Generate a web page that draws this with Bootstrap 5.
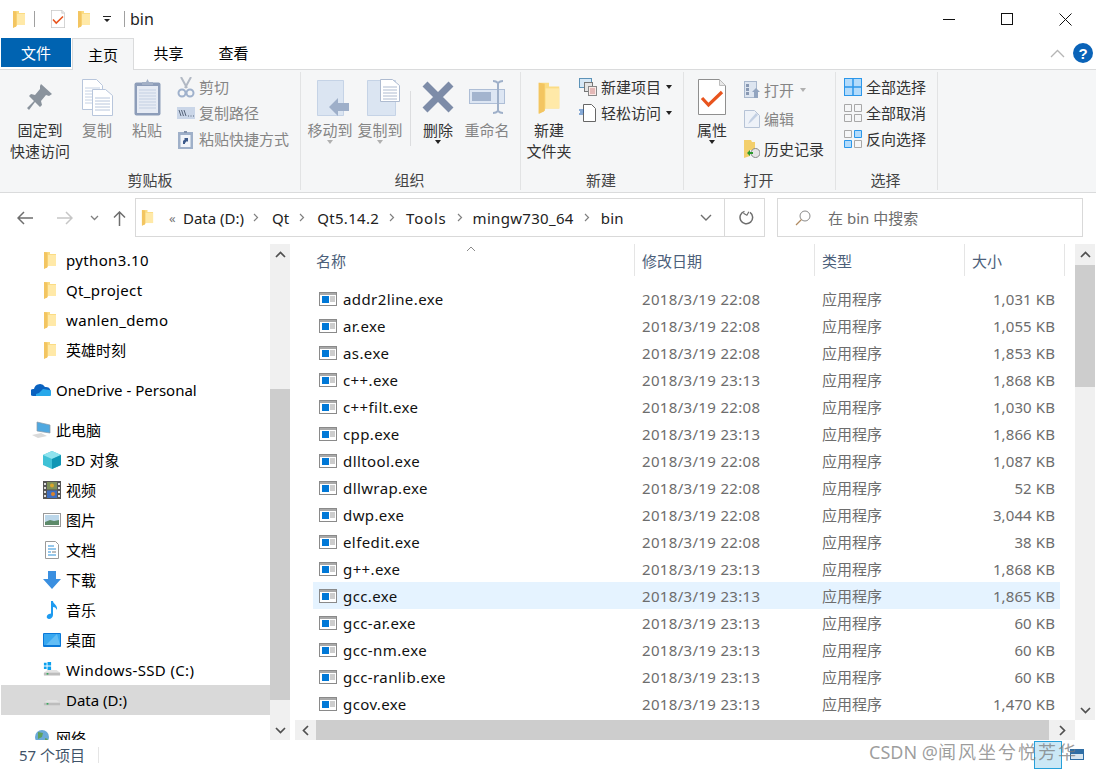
<!DOCTYPE html>
<html lang="zh">
<head>
<meta charset="utf-8">
<title>bin</title>
<link href="https://cdn.jsdelivr.net/npm/bootstrap@5.3.0/dist/css/bootstrap.min.css" rel="stylesheet">
<style>
html,body{height:100%;}
body{width:1096px;height:771px;overflow:hidden;background:#fff;color:#000;font-family:"Noto Sans","Noto Sans CJK SC",sans-serif;font-size:15px;line-height:20px;}
svg{display:block;flex:none;}
.win{width:1096px;height:771px;position:relative;overflow:hidden;}
.titlebar{height:38px;padding-left:12px;}
.t-sep{width:1px;height:16px;background:#a0a0a0;}
.t-arrow{width:8px;height:6px;}
.win-btn{width:58px;height:38px;}
.tabs{height:32px;}
.tab-file{width:70px;height:29px;margin-left:1px;background:#0063b1;color:#fff;}
.tab-home{width:62px;height:32px;margin-left:1px;background:#f5f6f7;border:1px solid #dadbdc;border-bottom:0;position:relative;z-index:1;}
.tab-plain{width:65px;height:30px;}
.tab-right{padding-right:3px;height:30px;}
.ribbon{height:124px;background:#f5f6f7;border-top:1px solid #dadbdc;border-bottom:1px solid #dadbdc;margin-top:-1px;color:#333;}
.grp{height:118px;margin-top:2px;border-right:1px solid #e2e3e4;}
.g1{width:301px;}.g2{width:220px;}.g3{width:163px;}.g4{width:152px;}.g5{width:102px;}
.grp-body{flex:1;padding-top:6px;}
.grp-name{height:20px;line-height:20px;text-align:center;color:#444;}
.g2 .grp-name,.g3 .grp-name,.g4 .grp-name,.g5 .grp-name{padding-right:2px;}
.big{display:flex;flex-direction:column;align-items:center;flex:none;width:46px;line-height:21px;text-align:center;white-space:nowrap;}
.big-w{width:60px;}
.big-ico{height:38px;margin-bottom:4px;display:flex;align-items:center;justify-content:center;}
.off{color:#858585;}
.smalls{margin-top:-4px;}
.sm{height:26px;display:flex;align-items:center;white-space:nowrap;}
.sm svg{margin-right:4px;}
.tri{width:0;height:0;border-left:3.5px solid transparent;border-right:3.5px solid transparent;border-top:4px solid #222;}
.tri.pale{border-top-color:#b0b0b0;}
.tri-u{margin-top:-1px;}
.vbar{width:1px;height:55px;background:#dcdddf;margin-top:13px;}
.addr{height:50px;padding-top:5px;}
.navs{width:135px;height:40px;}
.addr-box{width:630px;height:39px;border:1px solid #d9d9d9;color:#222;}
.crumb-sep{color:#777;}
.crumb{letter-spacing:.3px;}
.crumb-t{letter-spacing:.8px;}
.search{width:306px;height:39px;margin-left:12px;border:1px solid #d9d9d9;color:#6d6d6d;}
.main{height:497px;}
.side{width:270px;height:497px;overflow:hidden;flex:none;padding-top:2px;}
.nv{height:30px;display:flex;align-items:center;padding-left:43px;white-space:nowrap;}
.nv svg{width:18px;margin-right:5px;}
.nv-top{padding-left:31px;}
.nv-top svg{width:20px;margin-right:5px;}
.nv-sel{background:#d9d9d9;margin-left:1px;padding-left:42px;}
.lat{letter-spacing:.35px;}
.sb-v{width:20px;background:#f0f0f0;flex:none;margin-top:1px;display:flex;flex-direction:column;}
.sb-btn{height:20px;flex:none;display:flex;align-items:center;justify-content:center;}
.thumb{background:#cdcdcd;}
.pane{width:801px;margin-left:5px;flex:none;display:flex;flex-direction:column;}
.pane-top{height:477px;}
.list{width:780px;flex:none;overflow:hidden;}
.head{height:33px;color:#4c607a;margin-top:1px;}
.hc{height:32px;display:flex;align-items:center;flex:none;padding-left:7px;padding-top:2px;border-right:1px solid #e5e5e5;white-space:nowrap;}
.c-name{width:340px;}.c-date{width:180px;}.c-type{width:150px;}.c-size{width:100px;}
.rows{padding-left:18px;padding-top:8px;}
.fr{height:27px;width:747px;display:flex;align-items:center;color:#6d6d6d;white-space:nowrap;}
.fr-sel{background:#e5f3ff;}
.f-name{width:329px;display:flex;align-items:center;color:#111;padding-left:6px;letter-spacing:.4px;}
.f-name svg{margin-right:6px;}
.f-date{width:180px;letter-spacing:.33px;}.f-type{width:150px;padding-left:0;}.f-size{width:83px;text-align:right;letter-spacing:.1px;}
.sb-h{height:20px;width:780px;background:#f0f0f0;display:flex;}
.sb-hb{width:21px;flex:none;display:flex;align-items:center;justify-content:center;}
.status{height:30px;padding-left:19px;color:#3f5369;}
.st-sep{width:1px;height:16px;background:#e5e5e5;margin-left:13px;}
.mark-wm{position:absolute;left:869px;top:741px;height:22px;line-height:22px;font-size:18px;color:rgba(120,120,120,.72);white-space:nowrap;z-index:3;}
.mark-cjk{letter-spacing:2px;}
.tb-ico{position:absolute;left:1034px;top:741px;width:28px;height:28px;background:#cbe8f6;border:1px solid #26a0da;z-index:2;}
.tb-thumb{position:absolute;left:1070px;top:749px;z-index:2;}
</style>
</head>
<body>
<svg width="0" height="0" style="position:absolute">
<defs>
<symbol id="fold" viewBox="0 0 14 18"><path d="M1 1l6 0 0 2 6 0 0 12-8 0-1 1.500-3 1z" fill="#fbdc84"/><path d="M1 1l3.500 .5 0 14.500-.5 .6-3 1.400z" fill="#f3c561"/><path d="M5 4h8v11H5z" fill="#ffe9a8"/></symbol>
<symbol id="exe" viewBox="0 0 18 14"><rect x=".5" y=".5" width="17" height="13" fill="#fff" stroke="#8a8a8a"/><rect x="1" y="1" width="16" height="2" fill="#a9a9a9"/><rect x="3" y="4" width="7" height="7" fill="#0078d7"/><path d="M11 5h5M11 7h5M11 9h5" stroke="#9a9a9a"/></symbol>
<symbol id="drive" viewBox="0 0 20 18"><path d="M1 12l4-3h10l4 3v3H1z" fill="#e3e3e3"/><path d="M1 12h18v3H1z" fill="#bdbdbd"/><rect x="4" y="12.500" width="2" height="1.500" fill="#1fa84b"/></symbol>
<symbol id="doccheck" viewBox="0 0 28 36"><path d="M.5.5h21l6 6v29H.5z" fill="#fff" stroke="#8f8f8f"/><path d="M21.500.5v6h6" fill="#e8e8e8" stroke="#bdbdbd"/><path d="M4 19l6.500 7L24 13" fill="none" stroke="#e8541e" stroke-width="3.200"/></symbol>
</defs>
</svg>

<div class="win d-flex flex-column">
  <div class="titlebar d-flex align-items-center flex-none">
    <svg width="14" height="18"><use href="#fold"/></svg>
    <span class="t-sep ms-2 me-3" style="margin-left:9px"></span>
    <svg width="14" height="18" viewBox="0 0 28 36"><use href="#doccheck"/></svg>
    <svg class="ms-2" style="margin-left:12px!important" width="14" height="18"><use href="#fold"/></svg>
    <svg class="t-arrow" style="margin-left:12px" viewBox="0 0 8 6"><path d="M0 0h8v1H0zM1 3h6L4 6z" fill="#222"/></svg>
    <span class="t-sep" style="margin-left:13px"></span>
    <span style="margin-left:5px;font-size:16px;color:#222">bin</span>
    <div class="ms-auto d-flex" style="margin-right:2px">
      <div class="win-btn d-flex align-items-center justify-content-center"><svg width="13" height="13"><path d="M0 6.500h12" stroke="#111"/></svg></div>
      <div class="win-btn d-flex align-items-center justify-content-center"><svg width="13" height="13"><rect x=".5" y=".5" width="11" height="11" fill="none" stroke="#111"/></svg></div>
      <div class="win-btn d-flex align-items-center justify-content-center"><svg width="13" height="13"><path d="M.5.5l12 12M12.500.5l-12 12" stroke="#111"/></svg></div>
    </div>
  </div>

  <div class="tabs d-flex flex-none">
    <div class="tab-file d-flex align-items-center justify-content-center">文件</div>
    <div class="tab-home d-flex align-items-center justify-content-center">主页</div>
    <div class="tab-plain d-flex align-items-center justify-content-center" style="margin-left:2px">共享</div>
    <div class="tab-plain d-flex align-items-center justify-content-center">查看</div>
    <div class="tab-right ms-auto d-flex align-items-center">
      <svg width="15" height="9" class="me-2"><path d="M1 8l6.500-6.500L14 8" fill="none" stroke="#b5b5b5" stroke-width="1.300"/></svg>
      <svg width="20" height="20" viewBox="0 0 20 20"><circle cx="10" cy="10" r="10" fill="#0a63b8"/><text x="10" y="15.500" text-anchor="middle" font-size="15" font-weight="700" fill="#fff" font-family="Liberation Sans">?</text></svg>
    </div>
  </div>

  <div class="ribbon d-flex flex-none">
    <!-- 剪贴板 -->
    <div class="grp g1 d-flex flex-column flex-none">
      <div class="grp-body d-flex" style="padding-left:10px">
        <div class="big big-w"><div class="big-ico"><svg width="26" height="28" viewBox="0 0 26 28"><path d="M14 1l11 10-3 2-3-1-5 6 1 4-2 2-5-5-6 8-2-2 7-7-5-5 2-2 4 1 5-6v-3z" fill="#8a939d"/></svg></div><div>固定到<br>快速访问</div></div>
        <div class="big off" style="margin-left:4px"><div class="big-ico"><svg width="31" height="37" viewBox="0 0 31 37"><path d="M.5.500h14l6 6v24H.5z" fill="#fff" stroke="#b8c6dc"/><path d="M3 9h15M3 12h15M3 15h15M3 18h15M3 21h15M3 24h15" stroke="#c6d2e4"/><path d="M10.500 10.500h13l7 6v20h-20z" fill="#fff" stroke="#b8c6dc"/><path d="M13 19h15M13 22h15M13 25h15M13 28h15M13 31h15" stroke="#b8c6dc"/></svg></div><div>复制</div></div>
        <div class="big off" style="margin-left:4px"><div class="big-ico"><svg width="27" height="37" viewBox="0 0 27 37"><rect x=".5" y="3.500" width="26" height="33" rx="2" fill="#8d9db9"/><rect x="3" y="7" width="21" height="27" fill="#e6ebf4"/><path d="M5 11h17M5 14h17M5 17h17M5 20h17M5 23h17M5 26h17M5 29h17" stroke="#c3cfe2"/><path d="M8 6V3h4l1.500-3 1.500 3h4v3z" fill="#a3b0c6"/></svg></div><div>粘贴</div></div>
        <div class="smalls off" style="margin-left:7px">
          <div class="sm"><svg width="18" height="21" viewBox="0 0 18 21"><path d="M4 0l6 11M14 0L8 11" stroke="#b2b9c4" stroke-width="2"/><circle cx="5" cy="16" r="3.500" fill="none" stroke="#9fb1cc" stroke-width="2"/><circle cx="13" cy="16" r="3.500" fill="none" stroke="#9fb1cc" stroke-width="2"/></svg><span>剪切</span></div>
          <div class="sm"><svg width="18" height="12" viewBox="0 0 18 12"><rect width="18" height="12" fill="#cad6e8"/><path d="M2 3l2 6M4.500 3l2 6M7 3l2 6" stroke="#56647a"/><path d="M11 9h1M13.500 9h1M16 9h1" stroke="#56647a"/></svg><span>复制路径</span></div>
          <div class="sm"><svg width="18" height="19" viewBox="0 0 18 19" style="margin-right:4px"><rect x="1" y="2" width="15" height="17" fill="#9fb0c9"/><rect x="3.500" y="5" width="10" height="12" fill="#f2f5fa"/><path d="M7 1h3v2H7z" fill="#8292ac"/><path d="M6 14v-3l2-2-1-1h4v4l-1-1-2 2v1z" fill="#3e5b8b"/></svg><span>粘贴快捷方式</span></div>
        </div>
      </div>
      <div class="grp-name">剪贴板</div>
    </div>
    <!-- 组织 -->
    <div class="grp g2 d-flex flex-column flex-none">
      <div class="grp-body d-flex" style="padding-left:6px">
        <div class="big off"><div class="big-ico"><svg width="38" height="37" viewBox="0 0 38 37"><path d="M6.500 1.500h26v35h-26z" fill="#dbe5f2" stroke="#c5d3e6"/><path d="M18 28l9-9v5h11v8H27v5z" fill="#9eafc9"/></svg></div><div>移动到</div><div class="tri pale tri-u"></div></div>
        <div class="big off" style="margin-left:4px"><div class="big-ico"><svg width="40" height="37" viewBox="0 0 40 37"><path d="M7.500 1.500h28v35h-28z" fill="#dbe5f2" stroke="#c5d3e6"/><path d="M20.500.5h12l7 6v16h-19z" fill="#fff" stroke="#aebbd0"/><path d="M23 8h14M23 11h14M23 14h14M23 17h14M23 20h14" stroke="#aebbd0"/></svg></div><div>复制到</div><div class="tri pale tri-u"></div></div>
        <div class="vbar" style="margin-left:7px"></div>
        <div class="big" style="margin-left:4px"><div class="big-ico"><svg width="32" height="32" viewBox="0 0 32 32"><path d="M3 3l26 26M29 3L3 29" stroke="#7d8ca8" stroke-width="7"/></svg></div><div>删除</div><div class="tri tri-u"></div></div>
        <div class="big off" style="margin-left:3px"><div class="big-ico"><svg width="36" height="34" viewBox="0 0 36 34"><rect x=".5" y="9.500" width="35" height="14" fill="#dde6f3" stroke="#aebed6"/><rect x="3" y="12" width="19" height="9" fill="#a3b4ce"/><path d="M24 1c3 0 4 1 5 2 1-1 2-2 5-2M29 3v28M24 33c3 0 4-1 5-2 1 1 2 2 5 2" fill="none" stroke="#9fb0c9" stroke-width="2"/></svg></div><div>重命名</div></div>
      </div>
      <div class="grp-name">组织</div>
    </div>
    <!-- 新建 -->
    <div class="grp g3 d-flex flex-column flex-none">
      <div class="grp-body d-flex" style="padding-left:5px">
        <div class="big"><div class="big-ico"><svg width="24" height="33" viewBox="0 0 14 18" preserveAspectRatio="none"><use href="#fold"/></svg></div><div>新建<br>文件夹</div></div>
        <div class="smalls" style="margin-left:7px">
          <div class="sm"><svg width="18" height="18" viewBox="0 0 18 18"><rect x=".5" y=".5" width="12" height="9" fill="#d7e8f6" stroke="#5d93b8"/><rect x="5.500" y="4.500" width="8" height="9" fill="#e4e4e4" stroke="#777"/><rect x="9.500" y="8.500" width="8" height="9" fill="#fbe9e6" stroke="#888"/><path d="M11 11h5M11 13h5M11 15h5" stroke="#c88"/></svg><span>新建项目</span><span class="tri" style="margin-left:5px"></span></div>
          <div class="sm"><svg width="18" height="18" viewBox="0 0 18 18"><path d="M4.500.5h8l4 4v13h-12z" fill="#fff" stroke="#666"/><path d="M0 6h5M1 8h4M0 10h4" stroke="#1a5fb4"/></svg><span>轻松访问</span><span class="tri" style="margin-left:5px"></span></div>
        </div>
      </div>
      <div class="grp-name">新建</div>
    </div>
    <!-- 打开 -->
    <div class="grp g4 d-flex flex-column flex-none">
      <div class="grp-body d-flex" style="padding-left:13px">
        <div class="big" style="width:30px"><div class="big-ico"><svg width="28" height="36" viewBox="0 0 28 36"><use href="#doccheck"/></svg></div><div>属性</div><div class="tri tri-u"></div></div>
        <div class="off" style="margin-left:17px;margin-top:-3px">
          <div class="sm" style="height:29px"><svg width="16" height="18" viewBox="0 0 16 18" style="margin-right:4px"><rect x=".5" y=".5" width="12" height="16" fill="#dde5f0" stroke="#a9b8cd"/><path d="M2 3h3v3H2zM2 7h3v3H2zM2 11h3v3H2z" fill="#8999b3"/><path d="M12 7l4 4h-2v6h-4v-6H8z" fill="#93a5c0"/></svg><span>打开</span><span class="tri pale" style="margin-left:6px"></span></div>
          <div class="sm" style="height:30px"><svg width="16" height="18" viewBox="0 0 16 18" style="margin-right:4px"><path d="M.5.500h10l5 5v12H.5z" fill="#eef2f8" stroke="#b6c3d6"/><path d="M4 14l2-4 6-7 2 2-7 7z" fill="#c3d0e3"/></svg><span>编辑</span></div>
          <div class="sm" style="height:30px;color:#333"><svg width="16" height="18" viewBox="0 0 16 18" style="margin-right:4px"><path d="M0 0h7l1 2h3v8H6v6l-6 2z" fill="#f3cf6c"/><circle cx="11.500" cy="13" r="4.500" fill="#e5e5e5" stroke="#888"/><path d="M3 13l3-3v2h3v2H6v2z" fill="#2c9b2c"/></svg><span>历史记录</span></div>
        </div>
      </div>
      <div class="grp-name">打开</div>
    </div>
    <!-- 选择 -->
    <div class="grp g5 d-flex flex-column flex-none">
      <div class="grp-body" style="padding-left:8px">
        <div class="smalls">
          <div class="sm"><svg width="18" height="18" viewBox="0 0 18 18"><rect x=".5" y=".5" width="17" height="17" fill="#b3dbfb" stroke="#2b97ea"/><path d="M9 0v18M0 9h18" stroke="#2b97ea" stroke-width="1.500"/></svg><span>全部选择</span></div>
          <div class="sm"><svg width="18" height="18" viewBox="0 0 18 18"><path d="M.5.500h7v7h-7zM10.500.500h7v7h-7zM.5 10.500h7v7h-7zM10.500 10.500h7v7h-7z" fill="none" stroke="#a8a8a8"/></svg><span>全部取消</span></div>
          <div class="sm"><svg width="18" height="18" viewBox="0 0 18 18"><path d="M.5.500h7v7h-7zM10.500 10.500h7v7h-7z" fill="none" stroke="#a8a8a8"/><path d="M10.500.500h7v7h-7zM.5 10.500h7v7h-7z" fill="#b3dbfb" stroke="#2b97ea"/></svg><span>反向选择</span></div>
        </div>
      </div>
      <div class="grp-name">选择</div>
    </div>
  </div>

  <div class="addr d-flex flex-none">
    <div class="navs d-flex align-items-center flex-none" style="padding-left:17px">
      <svg width="16" height="14" viewBox="0 0 16 14"><path d="M7 1L1 7l6 6M1 7h15" fill="none" stroke="#6e6e6e" stroke-width="1.500"/></svg>
      <svg width="16" height="14" viewBox="0 0 16 14" style="margin-left:24px"><path d="M9 1l6 6-6 6M15 7H0" fill="none" stroke="#c6c6c6" stroke-width="1.500"/></svg>
      <svg width="9" height="6" viewBox="0 0 9 6" style="margin-left:17px"><path d="M1 1l3.500 3.500L8 1" fill="none" stroke="#808080" stroke-width="1.300"/></svg>
      <svg width="13" height="15" viewBox="0 0 13 15" style="margin-left:14px"><path d="M6.500 1v14M1 6.500L6.500 1 12 6.500" fill="none" stroke="#6e6e6e" stroke-width="1.500"/></svg>
    </div>
    <div class="addr-box d-flex align-items-center flex-none" style="padding-left:5px">
      <svg width="13" height="17"><use href="#fold"/></svg>
      <span class="crumb-sep" style="width:29px;padding-left:15px;font-size:13px">«</span>
      <span>Data (D:)</span>
      <svg class="mx-0" width="6" height="9" viewBox="0 0 6 9" style="margin-left:9px!important"><path d="M1 1l3.500 3.500L1 8" fill="none" stroke="#808080" stroke-width="1.200"/></svg>
      <span style="margin-left:13px">Qt</span>
      <svg width="6" height="9" viewBox="0 0 6 9" style="margin-left:10px"><path d="M1 1l3.500 3.500L1 8" fill="none" stroke="#808080" stroke-width="1.200"/></svg>
      <span class="crumb" style="margin-left:12px">Qt5.14.2</span>
      <svg width="6" height="9" viewBox="0 0 6 9" style="margin-left:10px"><path d="M1 1l3.500 3.500L1 8" fill="none" stroke="#808080" stroke-width="1.200"/></svg>
      <span class="crumb-t" style="margin-left:11px">Tools</span>
      <svg width="6" height="9" viewBox="0 0 6 9" style="margin-left:10px"><path d="M1 1l3.500 3.500L1 8" fill="none" stroke="#808080" stroke-width="1.200"/></svg>
      <span class="crumb" style="margin-left:10px">mingw730_64</span>
      <svg width="6" height="9" viewBox="0 0 6 9" style="margin-left:10px"><path d="M1 1l3.500 3.500L1 8" fill="none" stroke="#808080" stroke-width="1.200"/></svg>
      <span class="crumb" style="margin-left:11px">bin</span>
      <div class="ms-auto d-flex align-items-center h-100">
        <svg width="12" height="7" viewBox="0 0 12 7" style="margin-right:12px"><path d="M1 1l5 5 5-5" fill="none" stroke="#6e6e6e" stroke-width="1.400"/></svg>
        <span style="width:1px;height:37px;background:#d9d9d9"></span>
        <svg width="15" height="15" viewBox="0 0 15 15" style="margin:0 10px 0 14px"><path d="M11 2.300A6.300 6.300 0 1 1 5.500 1.400" fill="none" stroke="#6e6e6e" stroke-width="1.500"/><path d="M6 0v4h4" fill="none" stroke="#6e6e6e" stroke-width="1.200" transform="rotate(-60 8 3)"/></svg>
      </div>
    </div>
    <div class="search d-flex align-items-center flex-none" style="padding-left:17px">
      <svg width="16" height="16" viewBox="0 0 16 16"><circle cx="10" cy="6" r="5" fill="none" stroke="#8a8a8a"/><path d="M6.500 9.500L1 15" stroke="#b08a60" stroke-width="1.200"/></svg>
      <span style="margin-left:17px">在 bin 中搜索</span>
    </div>
  </div>

  <div class="main d-flex flex-none">
    <div class="side">
      <div class="nv lat"><svg height="18"><use href="#fold" width="14" height="18"/></svg>python3.10</div>
      <div class="nv lat"><svg height="18"><use href="#fold" width="14" height="18"/></svg>Qt_project</div>
      <div class="nv lat"><svg height="18"><use href="#fold" width="14" height="18"/></svg>wanlen_demo</div>
      <div class="nv"><svg height="18"><use href="#fold" width="14" height="18"/></svg>英雄时刻</div>
      <div class="nv nv-top mt-2" style="margin-top:10px!important"><svg height="14" viewBox="0 0 20 14"><path d="M2 13a3.500 3.500 0 0 1 1-7 6 6 0 0 1 11-2 4 4 0 0 1 2 9z" fill="#0a62c0"/><path d="M5 13h13a2.500 2.500 0 0 0 0-6l-6-1-4 4-3 1z" fill="#28a8ea"/></svg>OneDrive - Personal</div>
      <div class="nv nv-top" style="margin-top:10px"><svg height="18" viewBox="0 0 20 18"><path d="M6 1l13 3v8l-13-2z" fill="#4fa8e0" stroke="#8a9aa8" stroke-width=".7"/><path d="M1 14l9-2 6 3-9 2z" fill="#dadada"/></svg>此电脑</div>
      <div class="nv"><svg height="18" viewBox="0 0 18 18"><path d="M9 0l9 4v10l-9 4-9-4V4z" fill="#3fc1d6"/><path d="M0 4l9 4 9-4-9-4z" fill="#8fe3ee"/><path d="M9 8v10l9-4V4z" fill="#0f96b4"/></svg>3D 对象</div>
      <div class="nv"><svg height="18" viewBox="0 0 18 18"><rect width="18" height="18" fill="#555"/><path d="M1 2h2v2H1zM1 6h2v2H1zM1 10h2v2H1zM1 14h2v2H1zM15 2h2v2h-2zM15 6h2v2h-2zM15 10h2v2h-2zM15 14h2v2h-2z" fill="#ddd"/><rect x="4" y="1" width="10" height="7.500" fill="#7f8f5a"/><rect x="4" y="9.500" width="10" height="7.500" fill="#3f6fc0"/><circle cx="10" cy="13" r="2" fill="#d9822b"/><circle cx="9" cy="4.500" r="2" fill="#d9a62b"/></svg>视频</div>
      <div class="nv"><svg height="14" viewBox="0 0 18 14"><rect x=".5" y=".5" width="17" height="13" fill="#fff" stroke="#9a9a9a"/><rect x="2" y="2" width="14" height="10" fill="#bcd7ea"/><path d="M2 9l5-2 4 1 5-1v5H2z" fill="#5d8a6a"/></svg>图片</div>
      <div class="nv"><svg height="18" viewBox="0 0 18 18"><path d="M2.500.500h10l3 3v14h-13z" fill="#fff" stroke="#9a9a9a"/><path d="M5 5h6M5 8h8M5 11h3M5 14h8" stroke="#2a8fd8"/><path d="M9 11h4" stroke="#7a7a7a"/></svg>文档</div>
      <div class="nv"><svg height="18" viewBox="0 0 18 18"><path d="M5 0h8v8h5l-9 10L0 8h5z" fill="#3a8fe0"/></svg>下载</div>
      <div class="nv"><svg height="18" viewBox="0 0 18 18"><path d="M8 0h2c0 3 5 4 4 9-1-2-2-3-4-3v8c0 2-2 4-4 4-3 0-3-4 0-5l2-.5z" fill="#1e9bf0"/></svg>音乐</div>
      <div class="nv"><svg height="14" viewBox="0 0 18 14"><rect width="18" height="14" rx="1" fill="#0a78d8"/><rect x="1" y="1" width="16" height="11" fill="#38a8f0"/><path d="M14 1L3 12h14z" fill="#62bdf5"/></svg>桌面</div>
      <div class="nv lat"><svg height="18" viewBox="0 0 20 18"><use href="#drive"/><path d="M1 1h3v3H1zM5 0h4v4H5zM1 5h3v3H1zM5 5h4v4H5z" fill="#0aa0ee"/></svg>Windows-SSD (C:)</div>
      <div class="nv nv-sel"><svg height="18" viewBox="0 0 20 18"><use href="#drive"/></svg>Data (D:)</div>
      <div class="nv nv-top" style="margin-top:8px"><svg height="18" viewBox="0 0 20 18"><circle cx="11" cy="8" r="7" fill="#6aa9d8"/><path d="M7 3l5 1-1 4-4 2zM14 9l3 1-3 3z" fill="#5fa15f"/><rect x="1" y="12" width="8" height="5" fill="#4d8fd0"/></svg>网络</div>
    </div>
    <div class="sb-v" style="height:496px">
      <div class="sb-btn"><svg width="11" height="7" viewBox="0 0 11 7"><path d="M1 6l4.500-4.500L10 6" fill="none" stroke="#505050" stroke-width="1.700"/></svg></div>
      <div style="height:125px"></div>
      <div class="thumb" style="height:311px"></div>
      <div style="height:20px"></div>
      <div class="sb-btn"><svg width="11" height="7" viewBox="0 0 11 7"><path d="M1 1l4.500 4.500L10 1" fill="none" stroke="#505050" stroke-width="1.700"/></svg></div>
    </div>
    <div class="pane">
      <div class="pane-top d-flex">
        <div class="list">
          <div class="head d-flex">
            <div class="hc c-name justify-content-between" style="padding-left:21px;position:relative">名称<svg width="10" height="5" viewBox="0 0 10 5" style="position:absolute;left:171px;top:2px"><path d="M1 5l4-4 4 4" fill="none" stroke="#8a8a8a"/></svg></div>
            <div class="hc c-date">修改日期</div>
            <div class="hc c-type">类型</div>
            <div class="hc c-size">大小</div>
          </div>
          <div class="rows">
            <div class="fr"><div class="f-name"><svg width="18" height="14"><use href="#exe"/></svg>addr2line.exe</div><div class="f-date">2018/3/19 22:08</div><div class="f-type">应用程序</div><div class="f-size">1,031 KB</div></div>
            <div class="fr"><div class="f-name"><svg width="18" height="14"><use href="#exe"/></svg>ar.exe</div><div class="f-date">2018/3/19 22:08</div><div class="f-type">应用程序</div><div class="f-size">1,055 KB</div></div>
            <div class="fr"><div class="f-name"><svg width="18" height="14"><use href="#exe"/></svg>as.exe</div><div class="f-date">2018/3/19 22:08</div><div class="f-type">应用程序</div><div class="f-size">1,853 KB</div></div>
            <div class="fr"><div class="f-name"><svg width="18" height="14"><use href="#exe"/></svg>c++.exe</div><div class="f-date">2018/3/19 23:13</div><div class="f-type">应用程序</div><div class="f-size">1,868 KB</div></div>
            <div class="fr"><div class="f-name"><svg width="18" height="14"><use href="#exe"/></svg>c++filt.exe</div><div class="f-date">2018/3/19 22:08</div><div class="f-type">应用程序</div><div class="f-size">1,030 KB</div></div>
            <div class="fr"><div class="f-name"><svg width="18" height="14"><use href="#exe"/></svg>cpp.exe</div><div class="f-date">2018/3/19 23:13</div><div class="f-type">应用程序</div><div class="f-size">1,866 KB</div></div>
            <div class="fr"><div class="f-name"><svg width="18" height="14"><use href="#exe"/></svg>dlltool.exe</div><div class="f-date">2018/3/19 22:08</div><div class="f-type">应用程序</div><div class="f-size">1,087 KB</div></div>
            <div class="fr"><div class="f-name"><svg width="18" height="14"><use href="#exe"/></svg>dllwrap.exe</div><div class="f-date">2018/3/19 22:08</div><div class="f-type">应用程序</div><div class="f-size">52 KB</div></div>
            <div class="fr"><div class="f-name"><svg width="18" height="14"><use href="#exe"/></svg>dwp.exe</div><div class="f-date">2018/3/19 22:08</div><div class="f-type">应用程序</div><div class="f-size">3,044 KB</div></div>
            <div class="fr"><div class="f-name"><svg width="18" height="14"><use href="#exe"/></svg>elfedit.exe</div><div class="f-date">2018/3/19 22:08</div><div class="f-type">应用程序</div><div class="f-size">38 KB</div></div>
            <div class="fr"><div class="f-name"><svg width="18" height="14"><use href="#exe"/></svg>g++.exe</div><div class="f-date">2018/3/19 23:13</div><div class="f-type">应用程序</div><div class="f-size">1,868 KB</div></div>
            <div class="fr fr-sel"><div class="f-name"><svg width="18" height="14"><use href="#exe"/></svg>gcc.exe</div><div class="f-date">2018/3/19 23:13</div><div class="f-type">应用程序</div><div class="f-size">1,865 KB</div></div>
            <div class="fr"><div class="f-name"><svg width="18" height="14"><use href="#exe"/></svg>gcc-ar.exe</div><div class="f-date">2018/3/19 23:13</div><div class="f-type">应用程序</div><div class="f-size">60 KB</div></div>
            <div class="fr"><div class="f-name"><svg width="18" height="14"><use href="#exe"/></svg>gcc-nm.exe</div><div class="f-date">2018/3/19 23:13</div><div class="f-type">应用程序</div><div class="f-size">60 KB</div></div>
            <div class="fr"><div class="f-name"><svg width="18" height="14"><use href="#exe"/></svg>gcc-ranlib.exe</div><div class="f-date">2018/3/19 23:13</div><div class="f-type">应用程序</div><div class="f-size">60 KB</div></div>
            <div class="fr"><div class="f-name"><svg width="18" height="14"><use href="#exe"/></svg>gcov.exe</div><div class="f-date">2018/3/19 23:13</div><div class="f-type">应用程序</div><div class="f-size">1,470 KB</div></div>
          </div>
        </div>
        <div class="sb-v" style="height:476px">
          <div class="sb-btn"><svg width="11" height="7" viewBox="0 0 11 7"><path d="M1 6l4.500-4.500L10 6" fill="none" stroke="#505050" stroke-width="1.700"/></svg></div>
          <div class="thumb" style="height:122px;margin-top:1px"></div>
          <div class="flex-grow-1"></div>
          <div class="sb-btn"><svg width="11" height="7" viewBox="0 0 11 7"><path d="M1 1l4.500 4.500L10 1" fill="none" stroke="#505050" stroke-width="1.700"/></svg></div>
        </div>
      </div>
      <div class="sb-h">
        <div class="sb-hb"><svg width="7" height="11" viewBox="0 0 7 11"><path d="M6 1L1.500 5.500 6 10" fill="none" stroke="#505050" stroke-width="1.700"/></svg></div>
        <div class="thumb" style="width:733px"></div>
        <div class="sb-hb flex-grow-1"><svg width="7" height="11" viewBox="0 0 7 11"><path d="M1 1l4.500 4.500L1 10" fill="none" stroke="#505050" stroke-width="1.700"/></svg></div>
      </div>
    </div>
  </div>

  <div class="status d-flex align-items-center flex-none">
    <span>57 个项目</span><span class="st-sep"></span>
  </div>

  <div class="tb-ico"></div>
  <svg class="tb-thumb" width="14" height="11" viewBox="0 0 14 11"><rect width="14" height="11" fill="#2f6ea5"/><rect x="1" y="5" width="12" height="5" fill="#d8e6f0"/></svg>
  <div class="mark-wm">CSDN @<span class="mark-cjk">闻风坐兮悦芳华</span></div>
</div>
<script src="https://cdn.jsdelivr.net/npm/bootstrap@5.3.0/dist/js/bootstrap.bundle.min.js"></script>
</body>
</html>
